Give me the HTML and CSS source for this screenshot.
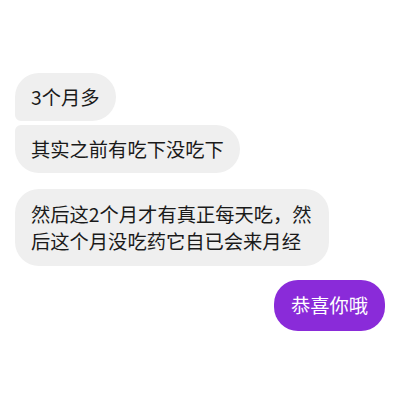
FILE: index.html
```html
<!DOCTYPE html>
<html lang="zh-CN">
<head>
  <meta charset="UTF-8">
  <title>聊天</title>
  <link rel="stylesheet" href="styles.css">
</head>
<body>
  <div class="chat">
    <!-- 对方的消息 -->
    <div class="msg other first">3个月多</div>
    <div class="msg other last">其实之前有吃下没吃下</div>
    <div class="msg other single">然后这2个月才有真正每天吃，然后这个月没吃药它自已会来月经</div>
    <!-- 自己的消息 -->
    <div class="msg mine">恭喜你哦</div>
  </div>
</body>
</html>
```

FILE: styles.css
```css
body {
  margin: 0;
  background: #ffffff;
  font-family: "Noto Sans CJK SC", "Noto Sans", sans-serif;
}

.chat {
  display: flex;
  flex-direction: column;
  align-items: flex-start;
  padding: 73px 15px 0 15px;
}

.msg {
  font-size: 19.3px;
  line-height: 27px;
  padding: 10.5px 16px;
  border-radius: 24px;
  color: #1a1a1a;
  max-width: 282px;
}

.other {
  background: #efefef;
}

.first {
  border-bottom-left-radius: 6px;
  margin-bottom: 4px;
}

.last {
  border-top-left-radius: 6px;
  margin-bottom: 16px;
}

.single {
  padding: 11.5px 16px;
  margin-bottom: 14px;
}

.mine {
  align-self: flex-end;
  background: #8a2bd9;
  color: #ffffff;
  padding: 12px 17px;
}
```
